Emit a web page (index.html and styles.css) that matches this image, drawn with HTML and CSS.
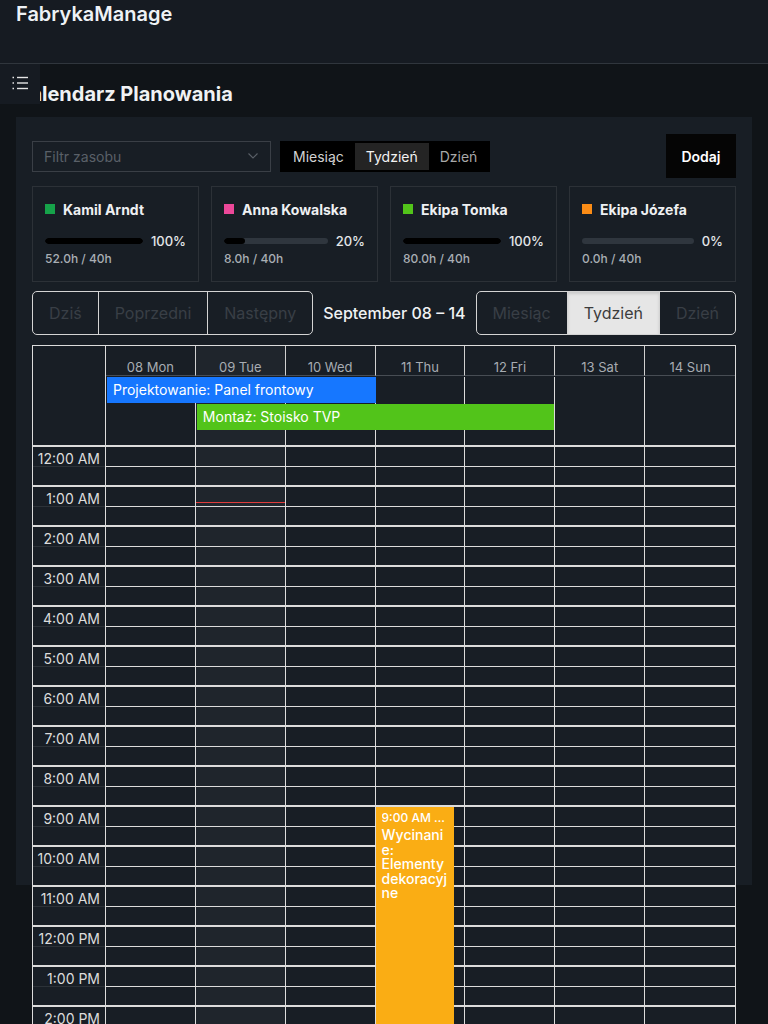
FILE: index.html
```html
<!DOCTYPE html>
<html lang="pl">
<head>
<meta charset="utf-8">
<title>FabrykaManage – Kalendarz Planowania</title>
<link rel="stylesheet" href="styles.css">
</head>
<body>
<header class="topbar">
  <div class="brand">FabrykaManage</div>
</header>
<main class="main">
  <button class="sidebar-toggle" aria-label="Menu">
    <svg width="16" height="14" viewBox="0 0 16 14" fill="none" stroke="#e6e6e6" stroke-width="1.4">
      <line x1="0.5" y1="1.5" x2="2" y2="1.5"/>
      <line x1="0.5" y1="7" x2="2" y2="7"/>
      <line x1="0.5" y1="12.5" x2="2" y2="12.5"/>
      <line x1="5" y1="1.5" x2="16" y2="1.5"/>
      <line x1="5" y1="7" x2="16" y2="7"/>
      <line x1="5" y1="12.5" x2="16" y2="12.5"/>
    </svg>
  </button>
  <h1 class="page-title">Kalendarz Planowania</h1>

  <section class="panel">
    <div class="controls">
      <div class="select">
        <span class="placeholder">Filtr zasobu</span>
        <svg class="chevron" width="10" height="6" viewBox="0 0 10 6" fill="none" stroke="#5a6068" stroke-width="1.1"><polyline points="0.5,0.5 5,5 9.5,0.5"/></svg>
      </div>
      <div class="seg">
        <button class="seg-btn">Miesiąc</button>
        <button class="seg-btn active">Tydzień</button>
        <button class="seg-btn dim">Dzień</button>
      </div>
      <button class="add-btn">Dodaj</button>
    </div>

    <div class="resources">
      <div class="res-card">
        <div class="res-name"><span class="swatch sw-green"></span>Kamil Arndt</div>
        <div class="res-progress"><div class="bar"><div class="fill" style="width:100%"></div></div><span class="pct">100%</span></div>
        <div class="res-hours">52.0h / 40h</div>
      </div>
      <div class="res-card">
        <div class="res-name"><span class="swatch sw-pink"></span>Anna Kowalska</div>
        <div class="res-progress"><div class="bar"><div class="fill" style="width:20%"></div></div><span class="pct">20%</span></div>
        <div class="res-hours">8.0h / 40h</div>
      </div>
      <div class="res-card">
        <div class="res-name"><span class="swatch sw-lime"></span>Ekipa Tomka</div>
        <div class="res-progress"><div class="bar"><div class="fill" style="width:100%"></div></div><span class="pct">100%</span></div>
        <div class="res-hours">80.0h / 40h</div>
      </div>
      <div class="res-card">
        <div class="res-name"><span class="swatch sw-orange"></span>Ekipa Józefa</div>
        <div class="res-progress"><div class="bar"><div class="fill" style="width:0%"></div></div><span class="pct">0%</span></div>
        <div class="res-hours">0.0h / 40h</div>
      </div>
    </div>

    <div class="toolbar">
      <div class="btn-group">
        <button class="tb-btn">Dziś</button>
        <button class="tb-btn">Poprzedni</button>
        <button class="tb-btn">Następny</button>
      </div>
      <h2 class="range-title">September 08 – 14</h2>
      <div class="btn-group">
        <button class="tb-btn">Miesiąc</button>
        <button class="tb-btn active">Tydzień</button>
        <button class="tb-btn">Dzień</button>
      </div>
    </div>

    <div class="calendar">
      <div class="cal-head">
        <div class="corner"></div>
        <div class="day-head">
          <div class="dow-row">
            <div class="dow">08 Mon</div>
            <div class="dow today">09 Tue</div>
            <div class="dow">10 Wed</div>
            <div class="dow">11 Thu</div>
            <div class="dow">12 Fri</div>
            <div class="dow">13 Sat</div>
            <div class="dow">14 Sun</div>
          </div>
          <div class="allday">
            <div class="allday-cell c1"></div>
            <div class="allday-cell c2 today"></div>
            <div class="allday-cell c3"></div>
            <div class="allday-cell c4"></div>
            <div class="allday-cell c5"></div>
            <div class="allday-cell c6"></div>
            <div class="allday-cell c7"></div>
            <div class="allday-event ev-blue">Projektowanie: Panel frontowy</div>
            <div class="allday-event ev-green">Montaż: Stoisko TVP</div>
          </div>
        </div>
      </div>
      <div class="cal-body">
        <div class="times">
          <div class="time-slot"><div class="time-label">12:00 AM</div></div>
          <div class="time-slot"><div class="time-label">1:00 AM</div></div>
          <div class="time-slot"><div class="time-label">2:00 AM</div></div>
          <div class="time-slot"><div class="time-label">3:00 AM</div></div>
          <div class="time-slot"><div class="time-label">4:00 AM</div></div>
          <div class="time-slot"><div class="time-label">5:00 AM</div></div>
          <div class="time-slot"><div class="time-label">6:00 AM</div></div>
          <div class="time-slot"><div class="time-label">7:00 AM</div></div>
          <div class="time-slot"><div class="time-label">8:00 AM</div></div>
          <div class="time-slot"><div class="time-label">9:00 AM</div></div>
          <div class="time-slot"><div class="time-label">10:00 AM</div></div>
          <div class="time-slot"><div class="time-label">11:00 AM</div></div>
          <div class="time-slot"><div class="time-label">12:00 PM</div></div>
          <div class="time-slot"><div class="time-label">1:00 PM</div></div>
          <div class="time-slot"><div class="time-label">2:00 PM</div></div>
          <div class="time-slot"><div class="time-label">3:00 PM</div></div>
          <div class="time-slot"><div class="time-label">4:00 PM</div></div>
          <div class="time-slot"><div class="time-label">5:00 PM</div></div>
          <div class="time-slot"><div class="time-label">6:00 PM</div></div>
          <div class="time-slot"><div class="time-label">7:00 PM</div></div>
          <div class="time-slot"><div class="time-label">8:00 PM</div></div>
          <div class="time-slot"><div class="time-label">9:00 PM</div></div>
          <div class="time-slot"><div class="time-label">10:00 PM</div></div>
          <div class="time-slot"><div class="time-label">11:00 PM</div></div>
        </div>
        <div class="day-col"></div>
        <div class="day-col today"><div class="now-line"></div></div>
        <div class="day-col"></div>
        <div class="day-col">
          <div class="timed-event">
            <div class="ev-time">9:00 AM - 5:00 PM</div>
            <div class="ev-title">Wycinanie: Elementy dekoracyjne</div>
          </div>
        </div>
        <div class="day-col"></div>
        <div class="day-col"></div>
        <div class="day-col"></div>
      </div>
    </div>
  </section>
</main>
</body>
</html>
```

FILE: styles.css
```css
* { box-sizing: border-box; }

body {
  margin: 0;
  background: #101418;
  color: #e6edf3;
  font-family: Inter, "Noto Sans", "Liberation Sans", sans-serif;
}

button { font-family: inherit; cursor: pointer; }

.topbar {
  height: 64px;
  background: #161b22;
  border-bottom: 1px solid #30363d;
  padding: 0 16px;
}

.brand {
  font-size: 20px;
  font-weight: 600;
  line-height: 28px;
  color: #eef2f6;
}

.main {
  position: relative;
  padding: 16px 16px 0;
}

.sidebar-toggle {
  position: absolute;
  left: 0;
  top: 0;
  width: 40px;
  height: 40px;
  padding: 0 0 2px;
  border: 0;
  background: #161b22;
  display: flex;
  align-items: center;
  justify-content: center;
  z-index: 2;
}

.page-title {
  margin: 0 0 9px;
  font-size: 20px;
  font-weight: 700;
  line-height: 28px;
  color: #f0f2f4;
}

/* the card surface is 768px tall; the calendar continues below it */
.panel {
  background: linear-gradient(#181e25, #181e25) top left / 100% 768px no-repeat;
  padding: 17px 16px 0;
}

/* controls */
.controls {
  display: flex;
  align-items: center;
  gap: 9px;
}

.select {
  width: 239px;
  height: 31px;
  border: 1px solid #3a3f46;
  display: flex;
  align-items: center;
  justify-content: space-between;
  padding: 0 12px 0 11px;
}

.placeholder {
  font-size: 14px;
  color: #5a6068;
}

.seg {
  display: flex;
  background: #000;
  padding: 2px;
  height: 31px;
}

.seg-btn {
  border: 0;
  background: transparent;
  color: #d2d2d2;
  font-size: 14px;
  padding: 0 11px;
  height: 27px;
}

.seg-btn.active { background: #242424; color: #f2f2f2; }
.seg-btn.dim { color: #a8a8a8; }

.add-btn {
  margin-left: auto;
  width: 70px;
  height: 44px;
  border: 0;
  background: #050505;
  color: #fff;
  font-size: 14px;
  font-weight: 600;
}

/* resources */
.resources {
  display: grid;
  grid-template-columns: repeat(4, 1fr);
  gap: 12px;
  margin-top: 8px;
}

.res-card {
  border: 1px solid #2c3137;
  padding: 12px 12px 14px;
}

.res-name {
  display: flex;
  align-items: center;
  gap: 8px;
  height: 20px;
  font-size: 14px;
  font-weight: 700;
  color: #eef0f2;
}

.swatch { width: 10px; height: 10px; flex: none; }
.sw-green { background: #16a34a; }
.sw-pink { background: #ec4899; }
.sw-lime { background: #52c41a; }
.sw-orange { background: #fa8c16; }

.res-progress {
  display: flex;
  align-items: center;
  gap: 8px;
  height: 20px;
  margin-top: 12px;
}

.bar {
  flex: 1;
  height: 6px;
  border-radius: 3px;
  background: #2f363e;
  overflow: hidden;
}

.fill { height: 100%; background: #000; border-radius: 3px; }

.pct {
  font-size: 13px;
  font-weight: 500;
  color: #e4e6e8;
}

.res-hours {
  font-size: 12px;
  line-height: 16px;
  font-weight: 500;
  color: #a9aeb4;
}

/* toolbar */
.toolbar {
  display: flex;
  align-items: center;
  justify-content: space-between;
  margin-top: 9px;
  height: 44px;
}

.btn-group {
  display: flex;
  border: 1px solid #d4d4d4;
  border-radius: 5px;
  overflow: hidden;
  height: 44px;
}

.tb-btn {
  border: 0;
  border-left: 1px solid #d4d4d4;
  background: transparent;
  color: #393f46;
  font-size: 16px;
  padding: 0 16px;
  height: 42px;
}

.tb-btn:first-child { border-left: 0; }

.tb-btn.active {
  background: #e6e6e6;
  color: #3c3c3c;
  box-shadow: inset 0 2px 3px rgba(0, 0, 0, 0.12);
}

.range-title {
  margin: 0;
  font-size: 16px;
  font-weight: 500;
  color: #f0f2f4;
}

/* calendar */
.calendar {
  margin-top: 10px;
  border: 1px solid #dcdcdc;
  border-bottom: 0;
  background: #181e25;
}

.cal-head {
  display: grid;
  grid-template-columns: 73px 1fr;
}

.corner { border-right: 1px solid #dcdcdc; }

.dow-row {
  display: grid;
  grid-template-columns: repeat(7, 1fr);
}

.dow {
  height: 30px;
  border-right: 1px solid #d0d0d0;
  border-bottom: 1px solid #474d54;
  display: flex;
  align-items: flex-end;
  justify-content: center;
  padding-bottom: 0;
  font-size: 13px;
  line-height: 16px;
  color: #a7acb2;
}

.dow:last-child, .allday-cell.c7, .day-col:last-child { border-right: 0; }

.today { background-color: #1f252c; }

.allday {
  display: grid;
  grid-template-columns: repeat(7, 1fr);
  grid-template-rows: 26px 26px 1fr;
  row-gap: 1px;
  height: 69px;
  padding-top: 1px;
}

.allday-cell {
  grid-row: 1 / -1;
  border-right: 1px solid #dcdcdc;
}
.c1 { grid-column: 1; }
.c2 { grid-column: 2; }
.c3 { grid-column: 3; }
.c4 { grid-column: 4; }
.c5 { grid-column: 5; }
.c6 { grid-column: 6; }
.c7 { grid-column: 7; }

.allday-event {
  position: relative;
  z-index: 1;
  font-size: 14px;
  line-height: 26px;
  color: #fff;
  padding: 0 6px;
  white-space: nowrap;
  overflow: hidden;
}

.ev-blue { grid-row: 1; grid-column: 1 / span 3; margin-left: 1px; background: #1677ff; }
.ev-green { grid-row: 2; grid-column: 2 / span 4; margin: 0 1px; background: #52c41a; }

.cal-body {
  display: grid;
  grid-template-columns: 73px repeat(7, 1fr);
}

.times { border-right: 1px solid #dcdcdc; }

.time-slot {
  height: 40px;
  border-top: 2px solid #dcdcdc;
}

.time-label {
  height: 20px;
  border-bottom: 1px solid #2c3238;
  text-align: right;
  padding-right: 5px;
  font-size: 14px;
  line-height: 23px;
  color: #dcdcdc;
}

.day-col {
  position: relative;
  border-right: 1px solid #dcdcdc;
  background-image: repeating-linear-gradient(
    to bottom,
    #dcdcdc 0, #dcdcdc 2px,
    transparent 2px, transparent 21px,
    #dcdcdc 21px, #dcdcdc 22px,
    transparent 22px, transparent 40px
  );
}

.now-line {
  position: absolute;
  left: 0;
  right: 0;
  top: 57px;
  height: 1px;
  background: #e03c3c;
}

.timed-event {
  position: absolute;
  left: 0;
  right: 10px;
  top: 362px;
  height: 318px;
  background: #faad14;
  color: #fff;
  padding: 3px 5px 0 6px;
  overflow: hidden;
}

.ev-time {
  font-size: 12px;
  line-height: 16px;
  font-weight: 500;
  white-space: nowrap;
  overflow: hidden;
  text-overflow: ellipsis;
}

.ev-title {
  margin-top: 2px;
  font-size: 14px;
  font-weight: 500;
  line-height: 14.5px;
  overflow-wrap: anywhere;
}
```
